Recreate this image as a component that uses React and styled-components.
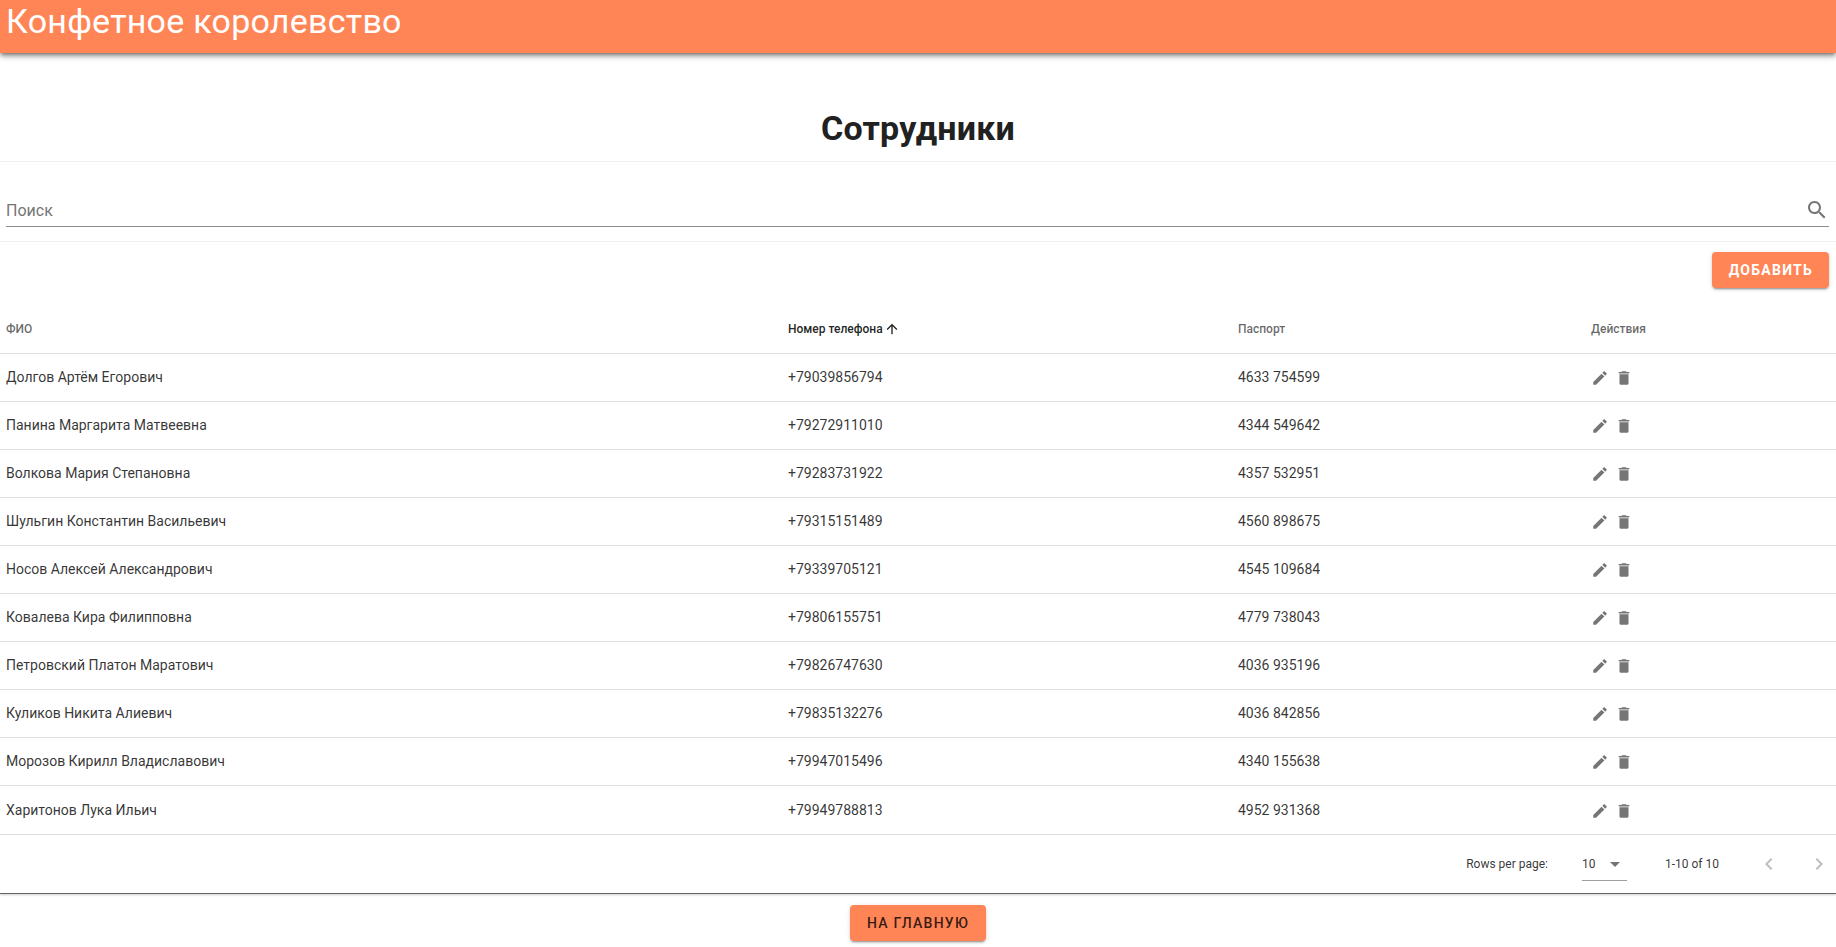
import React from "react";
import styled, { createGlobalStyle } from "styled-components";

const GlobalStyle = createGlobalStyle`
  html, body {
    margin: 0;
    padding: 0;
    background: #fff;
    font-family: Roboto, "Liberation Sans", sans-serif;
    color: rgba(0, 0, 0, 0.87);
  }
  * {
    box-sizing: border-box;
  }
`;

const coral = "#ff8557";

const Page = styled.div`
  display: flex;
  flex-direction: column;
  height: 947px;
  overflow: hidden;
`;

const Header = styled.header`
  height: 53px;
  flex-shrink: 0;
  background: ${coral};
  padding-left: 6px;
  box-shadow: 0 2px 4px -1px rgba(0, 0, 0, 0.45), 0 4px 5px 0 rgba(0, 0, 0, 0.2),
    0 1px 10px 0 rgba(0, 0, 0, 0.12);
`;

const Brand = styled.div`
  color: #fff;
  font-size: 34px;
  line-height: 43px;
  letter-spacing: 0.25px;
`;

const Title = styled.h1`
  margin: 0;
  height: 109px;
  padding-top: 53px;
  border-bottom: 1px solid #f2f2f2;
  text-align: center;
  font-size: 34px;
  line-height: 44px;
  font-weight: 700;
  letter-spacing: 0.25px;
  color: #212121;
`;

const SearchWrap = styled.div`
  height: 80px;
  padding: 29px 7px 0 6px;
  border-bottom: 1px solid #f2f2f2;
`;

const SearchField = styled.div`
  display: flex;
  align-items: center;
  justify-content: space-between;
  height: 36px;
  border-bottom: 1px solid #8c8c8c;
  font-size: 16px;
  color: #757575;
  padding-top: 3px;
`;

const Toolbar = styled.div`
  display: flex;
  justify-content: flex-end;
  height: 64px;
  padding: 10px 7px 0 0;
`;

const Button = styled.button`
  height: 36px;
  padding: ${(p) => (p.$light ? "0 16px 0 17px" : "0 16.5px")};
  border: none;
  border-radius: 4px;
  background: ${coral};
  font-family: inherit;
  font-size: 14px;
  font-weight: ${(p) => (p.$light ? 700 : 500)};
  letter-spacing: 1.25px;
  text-transform: uppercase;
  color: ${(p) => (p.$light ? "#fff" : "rgba(0, 0, 0, 0.8)")};
  box-shadow: 0 3px 1px -2px rgba(0, 0, 0, 0.2), 0 2px 2px 0 rgba(0, 0, 0, 0.14),
    0 1px 5px 0 rgba(0, 0, 0, 0.12);
`;

const Row = styled.div`
  display: grid;
  grid-template-columns: 782px 450px 353px 1fr;
  align-items: center;
  flex-shrink: 0;
  height: ${(p) => (p.$tall ? "49px" : "48px")};
  padding: 0 0 1px 6px;
  border-bottom: 1px solid #e0e0e0;
  font-size: ${(p) => (p.$head ? "12px" : "14px")};
  font-weight: ${(p) => (p.$head ? 500 : 400)};
  color: ${(p) => (p.$head ? "rgba(0, 0, 0, 0.6)" : "rgba(0, 0, 0, 0.8)")};
`;

const SortedHead = styled.div`
  display: flex;
  align-items: center;
  gap: 1px;
  color: rgba(0, 0, 0, 0.87);
`;

const Actions = styled.div`
  display: flex;
  align-items: center;
  gap: 6px;
  margin-top: 2px;
`;

const Icon = styled.svg`
  width: ${(p) => p.$size}px;
  height: ${(p) => p.$size}px;
  fill: ${(p) => p.$color || "rgba(0, 0, 0, 0.54)"};
  flex-shrink: 0;
`;

const Pagination = styled.div`
  display: flex;
  align-items: center;
  justify-content: flex-end;
  height: 59px;
  flex-shrink: 0;
  padding-right: 5px;
  border-bottom: 1px solid #666;
  box-shadow: 0 1px 2px rgba(0, 0, 0, 0.2);
  font-size: 12px;
  color: rgba(0, 0, 0, 0.8);
`;

const PerPage = styled.div`
  display: flex;
  align-items: center;
  justify-content: space-between;
  width: 45px;
  height: 32px;
  margin: 2px 38px 0 34px;
  padding-bottom: 2px;
  border-bottom: 1px solid #9e9e9e;
`;

const Pager = styled.div`
  display: flex;
  align-items: center;
  gap: 26px;
  margin-left: 38px;
`;

const Footer = styled.div`
  display: flex;
  justify-content: center;
  padding-top: 11px;
`;

const employees = [
  ["Долгов Артём Егорович", "+79039856794", "4633 754599"],
  ["Панина Маргарита Матвеевна", "+79272911010", "4344 549642"],
  ["Волкова Мария Степановна", "+79283731922", "4357 532951"],
  ["Шульгин Константин Васильевич", "+79315151489", "4560 898675"],
  ["Носов Алексей Александрович", "+79339705121", "4545 109684"],
  ["Ковалева Кира Филипповна", "+79806155751", "4779 738043"],
  ["Петровский Платон Маратович", "+79826747630", "4036 935196"],
  ["Куликов Никита Алиевич", "+79835132276", "4036 842856"],
  ["Морозов Кирилл Владиславович", "+79947015496", "4340 155638"],
  ["Харитонов Лука Ильич", "+79949788813", "4952 931368"],
];

const paths = {
  edit: "M3 17.25V21h3.75L17.81 9.94l-3.75-3.75L3 17.25zM20.71 7.04c.39-.39.39-1.02 0-1.41l-2.34-2.34c-.39-.39-1.02-.39-1.41 0l-1.83 1.83 3.75 3.75 1.83-1.83z",
  trash: "M6 19c0 1.1.9 2 2 2h8c1.1 0 2-.9 2-2V7H6v12zM19 4h-3.5l-1-1h-5l-1 1H5v2h14V4z",
  search:
    "M15.5 14h-.79l-.28-.27C15.41 12.59 16 11.11 16 9.5 16 5.91 13.09 3 9.5 3S3 5.91 3 9.5 5.91 16 9.5 16c1.61 0 3.09-.59 4.23-1.57l.27.28v.79l5 4.99L20.49 19l-4.99-5zm-6 0C7.01 14 5 11.99 5 9.5S7.01 5 9.5 5 14 7.01 14 9.5 11.99 14 9.5 14z",
  arrowUp: "M4 12l1.41 1.41L11 7.83V20h2V7.83l5.58 5.59L20 12l-8-8-8 8z",
  dropDown: "M7 10l5 5 5-5z",
  left: "M15.41 7.41L14 6l-6 6 6 6 1.41-1.41L10.83 12z",
  right: "M10 6L8.59 7.41 13.17 12l-4.58 4.59L10 18l6-6z",
};

const Glyph = ({ name, size = 18, color }) => (
  <Icon viewBox="0 0 24 24" $size={size} $color={color}>
    <path d={paths[name]} />
  </Icon>
);

export default function App() {
  return (
    <Page>
      <GlobalStyle />
      <Header>
        <Brand>Конфетное королевство</Brand>
      </Header>
      <Title>Сотрудники</Title>
      <SearchWrap>
        <SearchField>
          <span>Поиск</span>
          <Glyph name="search" size={24} />
        </SearchField>
      </SearchWrap>
      <Toolbar>
        <Button $light>Добавить</Button>
      </Toolbar>
      <Row $head>
        <div>ФИО</div>
        <SortedHead>
          Номер телефона
          <Glyph name="arrowUp" size={16} color="rgba(0, 0, 0, 0.87)" />
        </SortedHead>
        <div>Паспорт</div>
        <div>Действия</div>
      </Row>
      {employees.map(([name, phone, passport], i) => (
        <Row key={phone} $tall={i === employees.length - 1}>
          <div>{name}</div>
          <div>{phone}</div>
          <div>{passport}</div>
          <Actions>
            <Glyph name="edit" />
            <Glyph name="trash" />
          </Actions>
        </Row>
      ))}
      <Pagination>
        <span>Rows per page:</span>
        <PerPage>
          10
          <Glyph name="dropDown" size={24} />
        </PerPage>
        <span>1-10 of 10</span>
        <Pager>
          <Glyph name="left" size={24} color="rgba(0, 0, 0, 0.26)" />
          <Glyph name="right" size={24} color="rgba(0, 0, 0, 0.26)" />
        </Pager>
      </Pagination>
      <Footer>
        <Button>На главную</Button>
      </Footer>
    </Page>
  );
}
